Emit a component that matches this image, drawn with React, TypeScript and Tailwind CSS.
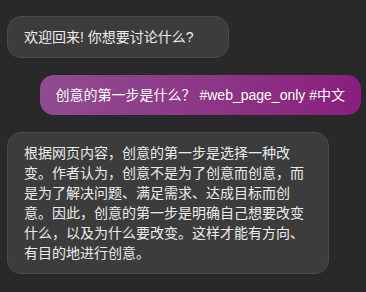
const font = {
  fontFamily: '"Liberation Sans", "Noto Sans CJK SC", sans-serif',
};

export default function App() {
  return (
    <div
      className="min-h-screen w-full bg-[#292929] pt-4 pl-[7px] pr-[5px] text-[14px] leading-5 text-[#ececec]"
      style={font}
    >
      <div className="flex flex-col gap-[17px]">
        {/* bot greeting */}
        <div className="w-[222px] rounded-[14px] border border-[#4a4a4a] bg-[#3c3c3c] px-4 py-2.5">
          欢迎回来! 你想要讨论什么?
        </div>

        {/* user message */}
        <div className="flex justify-end">
          <div className="rounded-[14px] bg-gradient-to-r from-[#8f4c90] to-[#8a1d7e] px-4 py-2.5 text-white">
            创意的第一步是什么？ #web_page_only #中文
          </div>
        </div>

        {/* bot answer */}
        <div className="w-[322px] rounded-[14px] border border-[#4a4a4a] bg-[#3c3c3c] px-4 py-2.5">
          根据网页内容，创意的第一步是选择一种改变。作者认为，创意不是为了创意而创意，而是为了解决问题、满足需求、达成目标而创意。因此，创意的第一步是明确自己想要改变什么，以及为什么要改变。这样才能有方向、有目的地进行创意。
        </div>
      </div>
    </div>
  );
}
